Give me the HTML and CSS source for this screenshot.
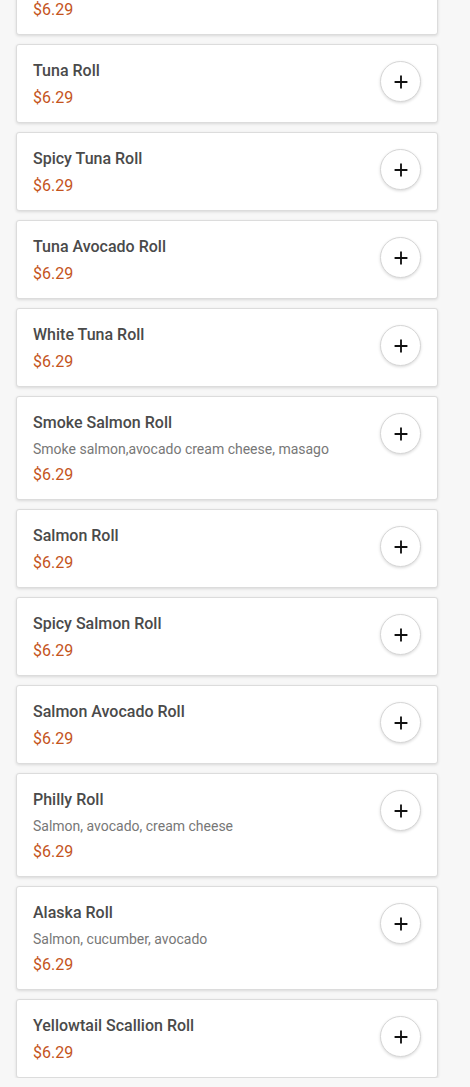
FILE: index.html
```html
<!DOCTYPE html>
<html lang="en">
<head>
  <meta charset="UTF-8">
  <meta name="viewport" content="width=device-width, initial-scale=1.0">
  <title>Rolls</title>
  <link rel="stylesheet" href="styles.css">
</head>
<body>
  <div class="menu-list">
    <div class="item">
      <div class="item-text">
        <h3 class="item-name">California Roll</h3>
        <p class="item-desc">Crab, avocado, cucumber</p>
        <p class="item-price">$6.29</p>
      </div>
      <button class="add-btn" aria-label="Add"><svg viewBox="0 0 24 24"><path d="M12 5v14M5 12h14"/></svg></button>
    </div>
    <div class="item">
      <div class="item-text">
        <h3 class="item-name">Tuna Roll</h3>
        <p class="item-price">$6.29</p>
      </div>
      <button class="add-btn" aria-label="Add"><svg viewBox="0 0 24 24"><path d="M12 5v14M5 12h14"/></svg></button>
    </div>
    <div class="item">
      <div class="item-text">
        <h3 class="item-name">Spicy Tuna Roll</h3>
        <p class="item-price">$6.29</p>
      </div>
      <button class="add-btn" aria-label="Add"><svg viewBox="0 0 24 24"><path d="M12 5v14M5 12h14"/></svg></button>
    </div>
    <div class="item">
      <div class="item-text">
        <h3 class="item-name">Tuna Avocado Roll</h3>
        <p class="item-price">$6.29</p>
      </div>
      <button class="add-btn" aria-label="Add"><svg viewBox="0 0 24 24"><path d="M12 5v14M5 12h14"/></svg></button>
    </div>
    <div class="item">
      <div class="item-text">
        <h3 class="item-name">White Tuna Roll</h3>
        <p class="item-price">$6.29</p>
      </div>
      <button class="add-btn" aria-label="Add"><svg viewBox="0 0 24 24"><path d="M12 5v14M5 12h14"/></svg></button>
    </div>
    <div class="item">
      <div class="item-text">
        <h3 class="item-name">Smoke Salmon Roll</h3>
        <p class="item-desc">Smoke salmon,avocado cream cheese, masago</p>
        <p class="item-price">$6.29</p>
      </div>
      <button class="add-btn" aria-label="Add"><svg viewBox="0 0 24 24"><path d="M12 5v14M5 12h14"/></svg></button>
    </div>
    <div class="item">
      <div class="item-text">
        <h3 class="item-name">Salmon Roll</h3>
        <p class="item-price">$6.29</p>
      </div>
      <button class="add-btn" aria-label="Add"><svg viewBox="0 0 24 24"><path d="M12 5v14M5 12h14"/></svg></button>
    </div>
    <div class="item">
      <div class="item-text">
        <h3 class="item-name">Spicy Salmon Roll</h3>
        <p class="item-price">$6.29</p>
      </div>
      <button class="add-btn" aria-label="Add"><svg viewBox="0 0 24 24"><path d="M12 5v14M5 12h14"/></svg></button>
    </div>
    <div class="item">
      <div class="item-text">
        <h3 class="item-name">Salmon Avocado Roll</h3>
        <p class="item-price">$6.29</p>
      </div>
      <button class="add-btn" aria-label="Add"><svg viewBox="0 0 24 24"><path d="M12 5v14M5 12h14"/></svg></button>
    </div>
    <div class="item">
      <div class="item-text">
        <h3 class="item-name">Philly Roll</h3>
        <p class="item-desc">Salmon, avocado, cream cheese</p>
        <p class="item-price">$6.29</p>
      </div>
      <button class="add-btn" aria-label="Add"><svg viewBox="0 0 24 24"><path d="M12 5v14M5 12h14"/></svg></button>
    </div>
    <div class="item">
      <div class="item-text">
        <h3 class="item-name">Alaska Roll</h3>
        <p class="item-desc">Salmon, cucumber, avocado</p>
        <p class="item-price">$6.29</p>
      </div>
      <button class="add-btn" aria-label="Add"><svg viewBox="0 0 24 24"><path d="M12 5v14M5 12h14"/></svg></button>
    </div>
    <div class="item">
      <div class="item-text">
        <h3 class="item-name">Yellowtail Scallion Roll</h3>
        <p class="item-price">$6.29</p>
      </div>
      <button class="add-btn" aria-label="Add"><svg viewBox="0 0 24 24"><path d="M12 5v14M5 12h14"/></svg></button>
    </div>
  </div>
</body>
</html>
```

FILE: styles.css
```css
body {
  font-family: Roboto, "Liberation Sans", Arial, sans-serif;
  background-color: #f7f7f7;
  margin: 0;
  padding: 0;
}
.menu-list {
  width: 422px;
  margin: -69px 0 0 16px;
  display: flex;
  flex-direction: column;
  gap: 9px;
}
.item {
  display: flex;
  align-items: flex-start;
  justify-content: space-between;
  background: #fff;
  border: 1px solid #dcdcdc;
  border-radius: 3px;
  box-shadow: 0 1px 3px rgba(0, 0, 0, 0.12);
  padding: 16px 16px 14px 16px;
}
.item-name {
  margin: 0 0 7px;
  font-size: 16px;
  line-height: 20px;
  font-weight: 500;
  color: #4a4a4a;
}
.item-desc {
  margin: 0 0 7px;
  font-size: 14px;
  line-height: 18px;
  color: #777;
}
.item-price {
  margin: 0;
  font-size: 16px;
  line-height: 20px;
  color: #c4541c;
}
.add-btn {
  width: 41px;
  height: 41px;
  padding: 0;
  border: 1px solid #d6d6d6;
  border-radius: 50%;
  background: #fff;
  box-shadow: 0 1px 3px rgba(0, 0, 0, 0.15);
  display: flex;
  align-items: center;
  justify-content: center;
  cursor: pointer;
}
.add-btn svg {
  width: 22px;
  height: 22px;
  stroke: #111;
  stroke-width: 2;
  fill: none;
}
```
